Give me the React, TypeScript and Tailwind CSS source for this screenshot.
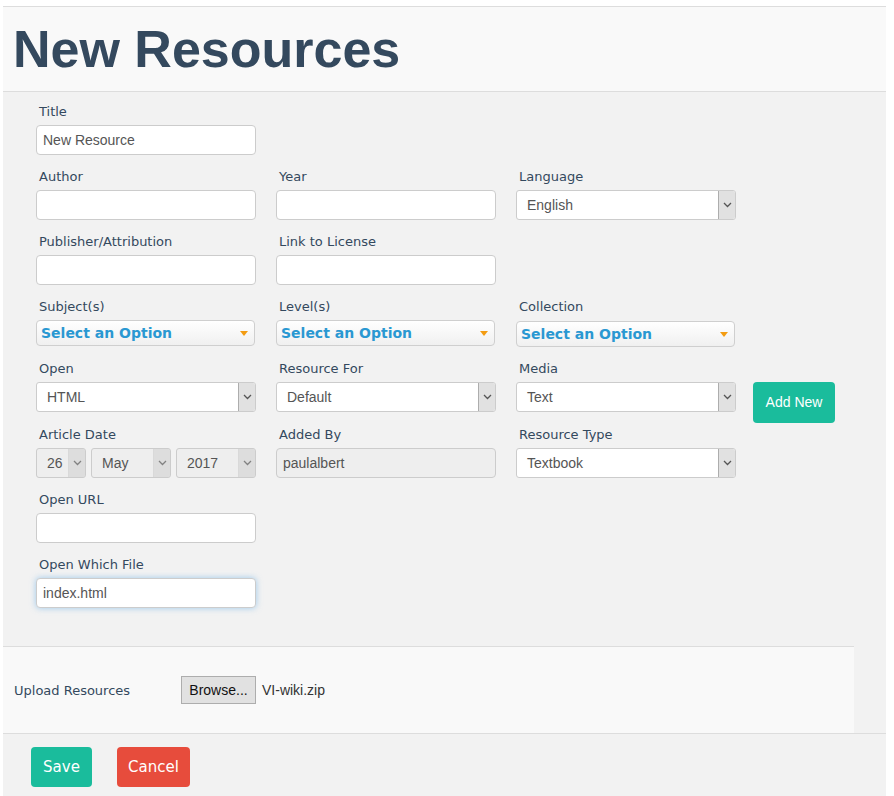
import React from 'react';

const labelCls = "block h-[17px] mb-[5px] pl-[3px] text-[13px] leading-[17px] text-[#34495e] font-['DejaVu_Sans',sans-serif]";

function Field({ label, children }: { label: string; children: React.ReactNode }) {
  return (
    <div className="w-[220px] flex flex-col">
      <span className={labelCls}>{label}</span>
      {children}
    </div>
  );
}

function TextInput({ value = '', disabled = false, focused = false }: { value?: string; disabled?: boolean; focused?: boolean }) {
  return (
    <div
      className={
        "h-[30px] w-full rounded-[4px] border px-[6px] flex items-center text-[14px] text-[#555] font-['Liberation_Sans',Arial,sans-serif] " +
        (disabled ? 'bg-[#eeeeee] border-[#cccccc]' : 'bg-white border-[#cccccc]') +
        (focused ? ' border-[#66afe9] shadow-[0_0_6px_rgba(102,175,233,0.6)]' : '')
      }
    >
      {value}
    </div>
  );
}

function Chevron() {
  return (
    <svg width="9" height="6" viewBox="0 0 9 6" fill="none">
      <path d="M1 1l3.5 3.5L8 1" stroke="#555" strokeWidth="1.3" />
    </svg>
  );
}

function NativeSelect({ value, disabled = false, width = 'w-full' }: { value: string; disabled?: boolean; width?: string }) {
  return (
    <div
      className={
        `${width} h-[30px] rounded-[3px] border border-[#cccccc] flex items-stretch overflow-hidden font-['Liberation_Sans',Arial,sans-serif] text-[14px] text-[#555] ` +
        (disabled ? 'bg-[#eeeeee]' : 'bg-white')
      }
    >
      <span className="flex-1 flex items-center pl-[10px]">{value}</span>
      <span
        className={
          'w-[17px] flex items-center justify-center border-l ' +
          (disabled ? 'bg-[#d6d6d6] border-[#d0d0d0] opacity-70' : 'bg-[#e1e1e1] border-[#adadad]')
        }
      >
        <Chevron />
      </span>
    </div>
  );
}

function Select2() {
  return (
    <div className="h-[26px] w-[219px] rounded-[4px] border border-[#cfcfcf] bg-gradient-to-b from-white to-[#f0f0f0] flex items-center justify-between pl-[4px] pr-[6px]">
      <span className="text-[14px] font-bold text-[#2a98d2] font-['DejaVu_Sans',sans-serif]">Select an Option</span>
      <svg width="8" height="5" viewBox="0 0 8 5">
        <path d="M0 0h8L4 5z" fill="#f39c12" />
      </svg>
    </div>
  );
}

export default function App() {
  return (
    <div className="bg-white min-h-[796px] pt-[6px] pl-[3px] pr-[8px]">
      <div className="bg-[#f2f2f2] border-t border-[#dddddd] min-h-[790px]">
        {/* Header */}
        <div className="bg-[#f9f9f9] border-b border-[#dddddd] h-[85px] pl-[10px] pt-[12px]">
          <h1 className="text-[52px] leading-[60px] font-bold text-[#34495e] font-['Liberation_Sans',Arial,sans-serif]">
            New Resources
          </h1>
        </div>

        {/* Form */}
        <div className="pl-[33px] pt-[11px] pb-[38px] flex flex-col gap-[13px]">
          <div className="flex gap-[20px]">
            <Field label="Title"><TextInput value="New Resource" /></Field>
          </div>
          <div className="flex gap-[20px]">
            <Field label="Author"><TextInput /></Field>
            <Field label="Year"><TextInput /></Field>
            <Field label="Language"><NativeSelect value="English" /></Field>
          </div>
          <div className="flex gap-[20px]">
            <Field label="Publisher/Attribution"><TextInput /></Field>
            <Field label="Link to License"><TextInput /></Field>
          </div>
          <div className="flex gap-[20px]">
            <Field label="Subject(s)"><Select2 /></Field>
            <Field label="Level(s)"><Select2 /></Field>
            <Field label="Collection"><div className="mt-[1px]"><Select2 /></div></Field>
          </div>
          <div className="flex gap-[20px] items-start h-[52px]">
            <Field label="Open"><NativeSelect value="HTML" /></Field>
            <Field label="Resource For"><NativeSelect value="Default" /></Field>
            <Field label="Media"><NativeSelect value="Text" /></Field>
            <button className="mt-[22px] ml-[-3px] h-[41px] w-[82px] shrink-0 rounded-[4px] bg-[#1abc9c] text-white text-[14px] font-['Liberation_Sans',Arial,sans-serif]">
              Add New
            </button>
          </div>
          <div className="flex gap-[20px] mt-[1px]">
            <Field label="Article Date">
              <div className="flex gap-[5px]">
                <NativeSelect value="26" disabled width="w-[50px]" />
                <NativeSelect value="May" disabled width="w-[80px]" />
                <NativeSelect value="2017" disabled width="w-[80px]" />
              </div>
            </Field>
            <Field label="Added By"><TextInput value="paulalbert" disabled /></Field>
            <Field label="Resource Type"><NativeSelect value="Textbook" /></Field>
          </div>
          <div className="flex gap-[20px]">
            <Field label="Open URL"><TextInput /></Field>
          </div>
          <div className="flex gap-[20px]">
            <Field label="Open Which File"><TextInput value="index.html" focused /></Field>
          </div>
        </div>

        {/* Upload */}
        <div className="w-[851px] h-[87px] bg-[#f9f9f9] border-t border-[#dddddd] flex items-center pl-[11px]">
          <span className="w-[167px] text-[13px] text-[#34495e] font-['DejaVu_Sans',sans-serif] mt-[1px]">Upload Resources</span>
          <span className="h-[28px] w-[75px] border border-[#adadad] bg-[#e1e1e1] flex items-center justify-center text-[14px] text-[#111] font-['Liberation_Sans',Arial,sans-serif]">
            Browse...
          </span>
          <span className="ml-[6px] text-[14px] text-[#333] font-['Liberation_Sans',Arial,sans-serif]">VI-wiki.zip</span>
        </div>

        {/* Footer */}
        <div className="border-t border-[#dddddd] pt-[13px] pl-[28px] flex gap-[25px]">
          <button className="h-[40px] w-[61px] rounded-[4px] bg-[#1abc9c] text-white text-[15px] font-['DejaVu_Sans',sans-serif]">
            Save
          </button>
          <button className="h-[40px] w-[73px] rounded-[4px] bg-[#e74c3c] text-white text-[15px] font-['DejaVu_Sans',sans-serif]">
            Cancel
          </button>
        </div>
      </div>
    </div>
  );
}
